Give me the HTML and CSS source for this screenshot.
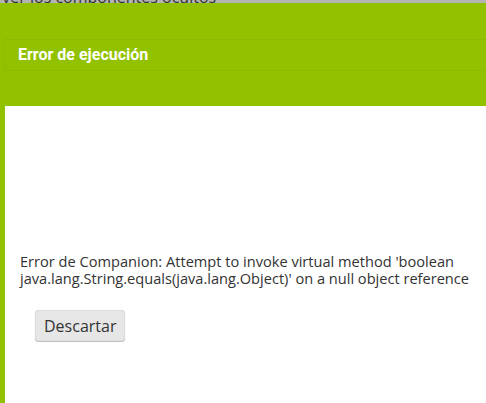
FILE: index.html
```html
<!DOCTYPE html>
<html>
<head>
<meta charset="utf-8">
<link rel="stylesheet" href="styles.css">
</head>
<body>
<div class="topstrip"><span class="toptext">Marcar para ver los componentes ocultos</span></div>
<div class="dialog">
  <div class="header">
    <div class="title">Error de ejecución</div>
  </div>
  <div class="content">
    <p class="message">Error de Companion: Attempt to invoke virtual method 'boolean java.lang.String.equals(java.lang.Object)' on a null object reference</p>
    <button class="btn">Descartar</button>
  </div>
</div>
</body>
</html>
```
FILE: styles.css
```css
html, body {
  margin: 0;
  padding: 0;
  height: 100%;
  overflow: hidden;
}
body {
  font-family: "Open Sans", "Liberation Sans", sans-serif;
  background: #fff;
}
.topstrip {
  height: 3px;
  background: #b4b4b4;
  overflow: hidden;
  white-space: nowrap;
}
.toptext {
  display: block;
  margin-top: -11px;
  margin-left: -93px;
  font-size: 16px;
  line-height: 16px;
  color: #333;
}
.dialog {
  background: #92c100;
  padding-left: 5px;
  height: 400px;
  display: flex;
  flex-direction: column;
}
.header {
  height: 103px;
  padding-top: 36px;
  margin-left: -1px;
  box-sizing: border-box;
}
.title {
  height: 32px;
  box-sizing: border-box;
  border: 1px solid rgba(0, 0, 0, 0.03);
  border-right: none;
  padding-left: 13px;
  font-family: Roboto, "Liberation Sans", sans-serif;
  font-weight: bold;
  font-size: 16px;
  line-height: 30px;
  color: #fff;
}
.content {
  flex: 1;
  background: #fff;
  padding: 147px 10px 0 15px;
}
.message {
  margin: 0;
  font-size: 14.6px;
  line-height: 17px;
  color: #333;
}
.btn {
  margin: 23px 0 0 15px;
  height: 31px;
  padding: 0 8px;
  border: 1px solid #dcdcdc;
  border-radius: 3px;
  background: #e6e6e6;
  box-shadow: 0 1px 1px rgba(0, 0, 0, 0.25);
  font-family: "Open Sans", "Liberation Sans", sans-serif;
  font-size: 16px;
  color: #333;
}
```
